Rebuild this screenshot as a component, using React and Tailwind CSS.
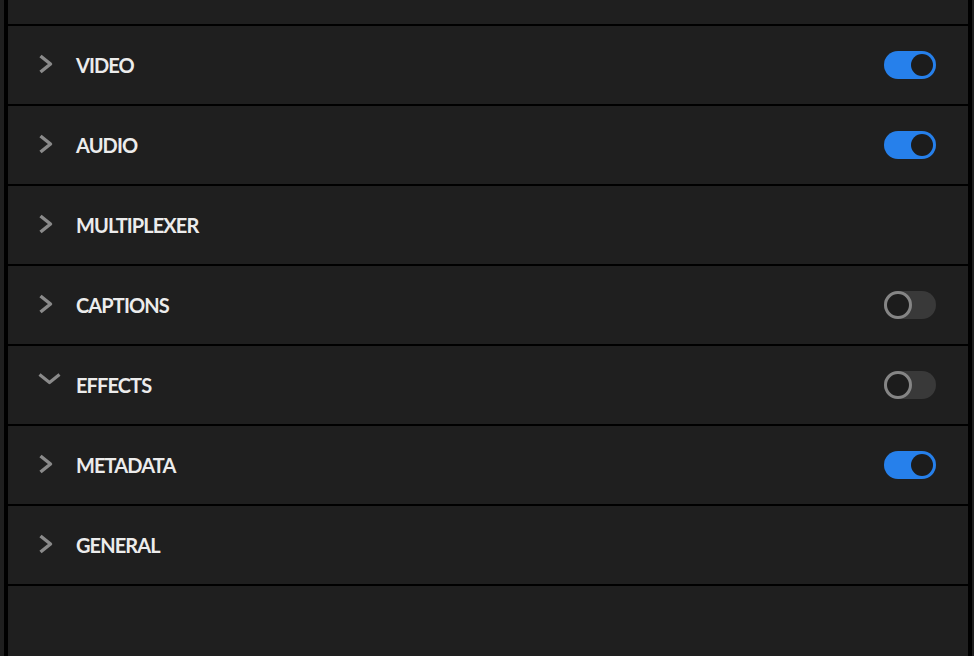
import React from "react";

const sections = [
  { name: "VIDEO", toggle: true, on: true },
  { name: "AUDIO", toggle: true, on: true },
  { name: "MULTIPLEXER", toggle: false },
  { name: "CAPTIONS", toggle: true, on: false },
  { name: "EFFECTS", toggle: true, on: false, open: true },
  { name: "METADATA", toggle: true, on: true },
  { name: "GENERAL", toggle: false },
];

function Chevron({ open }) {
  return (
    <div className="w-[24px] h-[24px] shrink-0">
      {open ? (
        <svg width="28" height="24" viewBox="0 0 28 24" className="overflow-visible">
          <path d="M5.5 1.5 L15.5 9.5 L25.5 1.5" fill="none" stroke="#8a8a8a" strokeWidth="3.2" strokeLinejoin="round" />
        </svg>
      ) : (
        <svg width="24" height="24" viewBox="0 0 24 24">
          <path d="M6.5 3 L16.5 11 L6.5 19" fill="none" stroke="#8a8a8a" strokeWidth="3.5" strokeLinejoin="round" />
        </svg>
      )}
    </div>
  );
}

function Toggle({ on }) {
  if (on) {
    return (
      <div className="w-[52px] h-[28px] rounded-full bg-[#2680eb] flex items-center justify-end pr-[3px]">
        <div className="w-[22px] h-[22px] rounded-full bg-[#1c1c1c]" />
      </div>
    );
  }
  return (
    <div className="w-[52px] h-[28px] rounded-full bg-[#393939] flex items-center">
      <div className="w-[28px] h-[28px] rounded-full bg-[#1c1c1c] border-[3px] border-[#858585]" />
    </div>
  );
}

export default function App() {
  return (
    <div
      className="w-[974px] h-[656px] overflow-hidden bg-[#1f1f1f] pl-[4px] pr-[2px]"
      style={{ fontFamily: "Lato, 'Open Sans', sans-serif" }}
    >
      <div className="h-full border-x-4 border-black bg-[#1f1f1f] flex flex-col">
        <div className="h-[26px] shrink-0 border-b-2 border-black" />
        {sections.map((s) => (
          <div
            key={s.name}
            className="h-[80px] shrink-0 border-b-2 border-black flex items-center pl-[26px] pr-[32px]"
          >
            <Chevron open={s.open} />
            <span className="ml-[18px] text-[20px] font-bold text-[#ececec] tracking-[-0.9px]">
              {s.name}
            </span>
            <div className="flex-1" />
            {s.toggle && <Toggle on={s.on} />}
          </div>
        ))}
      </div>
    </div>
  );
}
